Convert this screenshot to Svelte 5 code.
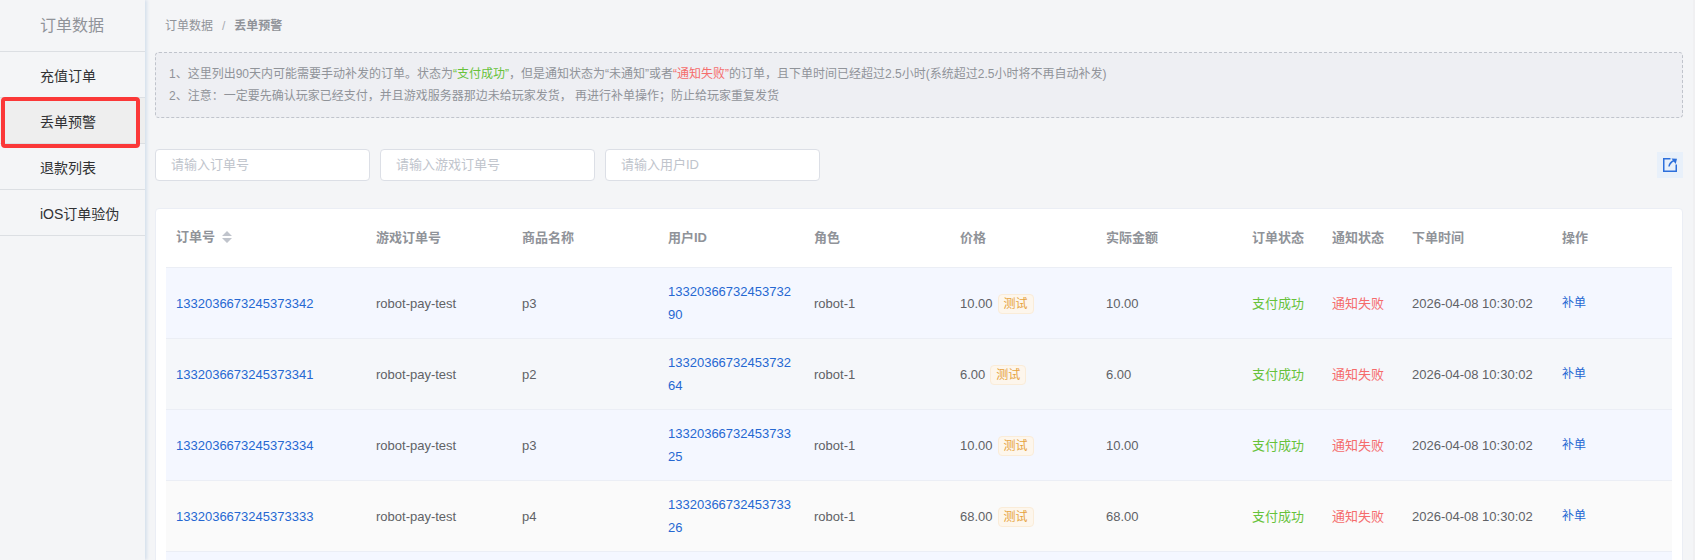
<script lang="ts">
  interface Order {
    id: string;
    gameOrder: string;
    product: string;
    userId: string;
    role: string;
    price: string;
    time: string;
  }

  const menus = ['充值订单', '丢单预警', '退款列表', 'iOS订单验伪'];
  const filters = ['请输入订单号', '请输入游戏订单号', '请输入用户ID'];
  const columns = [
    '游戏订单号', '商品名称', '用户ID', '角色', '价格', '实际金额',
    '订单状态', '通知状态', '下单时间', '操作'
  ];

  const orders: Order[] = [
    { id: '1332036673245373342', gameOrder: 'robot-pay-test', product: 'p3', userId: '1332036673245373290', role: 'robot-1', price: '10.00', time: '2026-04-08 10:30:02' },
    { id: '1332036673245373341', gameOrder: 'robot-pay-test', product: 'p2', userId: '1332036673245373264', role: 'robot-1', price: '6.00', time: '2026-04-08 10:30:02' },
    { id: '1332036673245373334', gameOrder: 'robot-pay-test', product: 'p3', userId: '1332036673245373325', role: 'robot-1', price: '10.00', time: '2026-04-08 10:30:02' },
    { id: '1332036673245373333', gameOrder: 'robot-pay-test', product: 'p4', userId: '1332036673245373326', role: 'robot-1', price: '68.00', time: '2026-04-08 10:30:02' }
  ];

  let active = $state('丢单预警');
  let hovered = $state(1);
</script>

<div class="layout">
  <aside class="sidebar">
    <div class="sidebar-title">订单数据</div>
    <nav>
      {#each menus as menu}
        <a
          href="#{menu}"
          class="menu-item"
          class:active={menu === active}
          onclick={() => (active = menu)}
        >{menu}</a>
      {/each}
    </nav>
  </aside>

  <main class="main">
    <div class="breadcrumb">
      <span>订单数据</span>
      <span class="separator">/</span>
      <strong>丢单预警</strong>
    </div>

    <div class="notice">
      <p>1、这里列出90天内可能需要手动补发的订单。状态为<span class="success">“支付成功”</span>，但是通知状态为“未通知”或者<span class="danger">“通知失败”</span>的订单，且下单时间已经超过2.5小时(系统超过2.5小时将不再自动补发)</p>
      <p>2、注意：一定要先确认玩家已经支付，并且游戏服务器那边未给玩家发货， 再进行补单操作；防止给玩家重复发货</p>
    </div>

    <div class="toolbar">
      {#each filters as filter}
        <input type="text" placeholder={filter} aria-label={filter} />
      {/each}
      <button class="export" aria-label="导出">
        <svg viewBox="0 0 16 16" width="16" height="16" fill="none" stroke="currentColor" stroke-width="1.5">
          <path d="M8.500 1.750H1.750v12.500h12.500V7.500" />
          <path d="M7 9.500c.4-2.600 2-4.500 5-6" />
          <path d="M9.500 1.500l5.500.3-1.300 5.200z" fill="currentColor" stroke="none" />
        </svg>
      </button>
    </div>

    <div class="card">
      <table>
        <colgroup>
          <col class="w-id" />
          <col span="6" />
          <col class="w-status" />
          <col class="w-status" />
          <col class="w-time" />
          <col class="w-action" />
        </colgroup>
        <thead>
          <tr>
            <th>
              <span class="sortable">
                订单号
                <svg viewBox="0 0 10 12" width="10" height="12" fill="#c0c4cc" aria-hidden="true">
                  <path d="M0 5L5 0l5 5zM0 7h10l-5 5z" />
                </svg>
              </span>
            </th>
            {#each columns as column}
              <th>{column}</th>
            {/each}
          </tr>
        </thead>
        <tbody>
          {#each orders as order, i}
            <tr class:highlight={i % 2 === 0} class:hover={i === hovered} onmouseenter={() => (hovered = i)}>
              <td><a href="#order">{order.id}</a></td>
              <td>{order.gameOrder}</td>
              <td>{order.product}</td>
              <td><a href="#user">{order.userId}</a></td>
              <td>{order.role}</td>
              <td>{order.price}<span class="tag">测试</span></td>
              <td>{order.price}</td>
              <td class="success">支付成功</td>
              <td class="danger">通知失败</td>
              <td>{order.time}</td>
              <td><button class="link">补单</button></td>
            </tr>
          {/each}
          <!-- blank row until the next page is loaded -->
          <tr class="highlight placeholder" aria-hidden="true">
            <td colspan="11"></td>
          </tr>
        </tbody>
      </table>
    </div>
  </main>
</div>

<style>
:global(body) {
  background: #f4f5f7;
  overflow: hidden;
}

.layout {
  display: flex;
  height: 100vh;
  overflow: hidden;
  box-sizing: border-box;
  border-right: 2px solid #f0f0f2;
  font-family: "Liberation Sans", "Noto Sans CJK SC", sans-serif;
  font-size: 13px;
  color: #606266;
}

.sidebar {
  position: relative;
  z-index: 1;
  flex: 0 0 145px;
  background: #f4f5f7;
  box-shadow: 2px 0 3px #d6e0ec;
}

.sidebar-title {
  height: 51px;
  padding-left: 40px;
  line-height: 51px;
  font-size: 16px;
  color: #909399;
  border-bottom: 1px solid #dcdfe3;
}

.menu-item {
  position: relative;
  display: block;
  height: 45px;
  padding-left: 40px;
  line-height: 49px;
  font-size: 14px;
  color: #303133;
  text-decoration: none;
  border-bottom: 1px solid #dcdfe3;
}

.menu-item.active {
  background: #eee;
}

.menu-item.active::after {
  content: "";
  position: absolute;
  inset: -1px 5px -5px 1px;
  border: 4px solid #fb3838;
  border-radius: 4px;
  z-index: 1;
}

.main {
  flex: 1;
  min-width: 0;
  padding: 0 10px;
  overflow-y: auto;
  scrollbar-width: none;
}

.breadcrumb {
  display: flex;
  gap: 9px;
  height: 52px;
  padding-left: 10px;
  line-height: 52px;
  font-size: 12px;
  color: #909399;
}

.separator {
  color: #a8abb2;
}

.notice {
  padding: 10px 13px;
  background: #eeeff3;
  border: 1px dashed #c0c4cc;
  border-radius: 4px;
  font-size: 12px;
  line-height: 22px;
  color: #909399;
}

.notice p {
  margin: 0;
}

.toolbar {
  display: flex;
  align-items: center;
  gap: 10px;
  margin: 31px 0 27px;
}

.toolbar input {
  width: 215px;
  height: 32px;
  box-sizing: border-box;
  padding: 0 15px 2px;
  border: 1px solid #dcdfe6;
  border-radius: 4px;
  background: #fff;
  font: inherit;
  color: #606266;
  outline: none;
}

.toolbar input::placeholder {
  color: #c0c4cc;
}

.export {
  display: flex;
  align-items: center;
  justify-content: center;
  width: 26px;
  height: 26px;
  margin-left: auto;
  padding: 0;
  border: 0;
  background: #e8f0fa;
  color: #2d6fdb;
  cursor: pointer;
}

.card {
  padding: 0 10px;
  background: #fff;
  border: 1px solid #ebeef5;
  border-radius: 4px;
}

table {
  width: 100%;
  table-layout: fixed;
  border-collapse: separate;
  border-spacing: 0;
}

.w-id {
  width: 200px;
}

.w-status {
  width: 80px;
}

.w-time {
  width: 150px;
}

.w-action {
  width: 120px;
}

th,
td {
  padding: 12px 10px;
  border-bottom: 1px solid #ebeef5;
  line-height: 23px;
  text-align: left;
  word-break: break-all;
}

th {
  padding: 17px 10px 18px;
  color: #909399;
}

.sortable {
  display: flex;
  align-items: center;
  gap: 7px;
  margin-top: -2px;
}

.highlight {
  background: #f4f7ff;
}

.placeholder td {
  height: 46px;
}

tbody tr:nth-child(even) {
  background: #fafafa;
}

tbody tr.hover {
  background: #f5f7fa;
}

td a,
.link {
  color: #2668d2;
  text-decoration: none;
}

.link {
  padding: 0;
  border: 0;
  background: none;
  font: inherit;
  font-size: 12px;
  cursor: pointer;
}

.tag {
  display: inline-block;
  height: 18px;
  margin-left: 5px;
  padding: 0 5px;
  line-height: 18px;
  font-size: 12px;
  color: #e6a23c;
  background: #fdf6ec;
  border: 1px solid #faecd8;
  border-radius: 4px;
}

.success {
  color: #67c23a;
}

.danger {
  color: #f56c6c;
}
</style>
